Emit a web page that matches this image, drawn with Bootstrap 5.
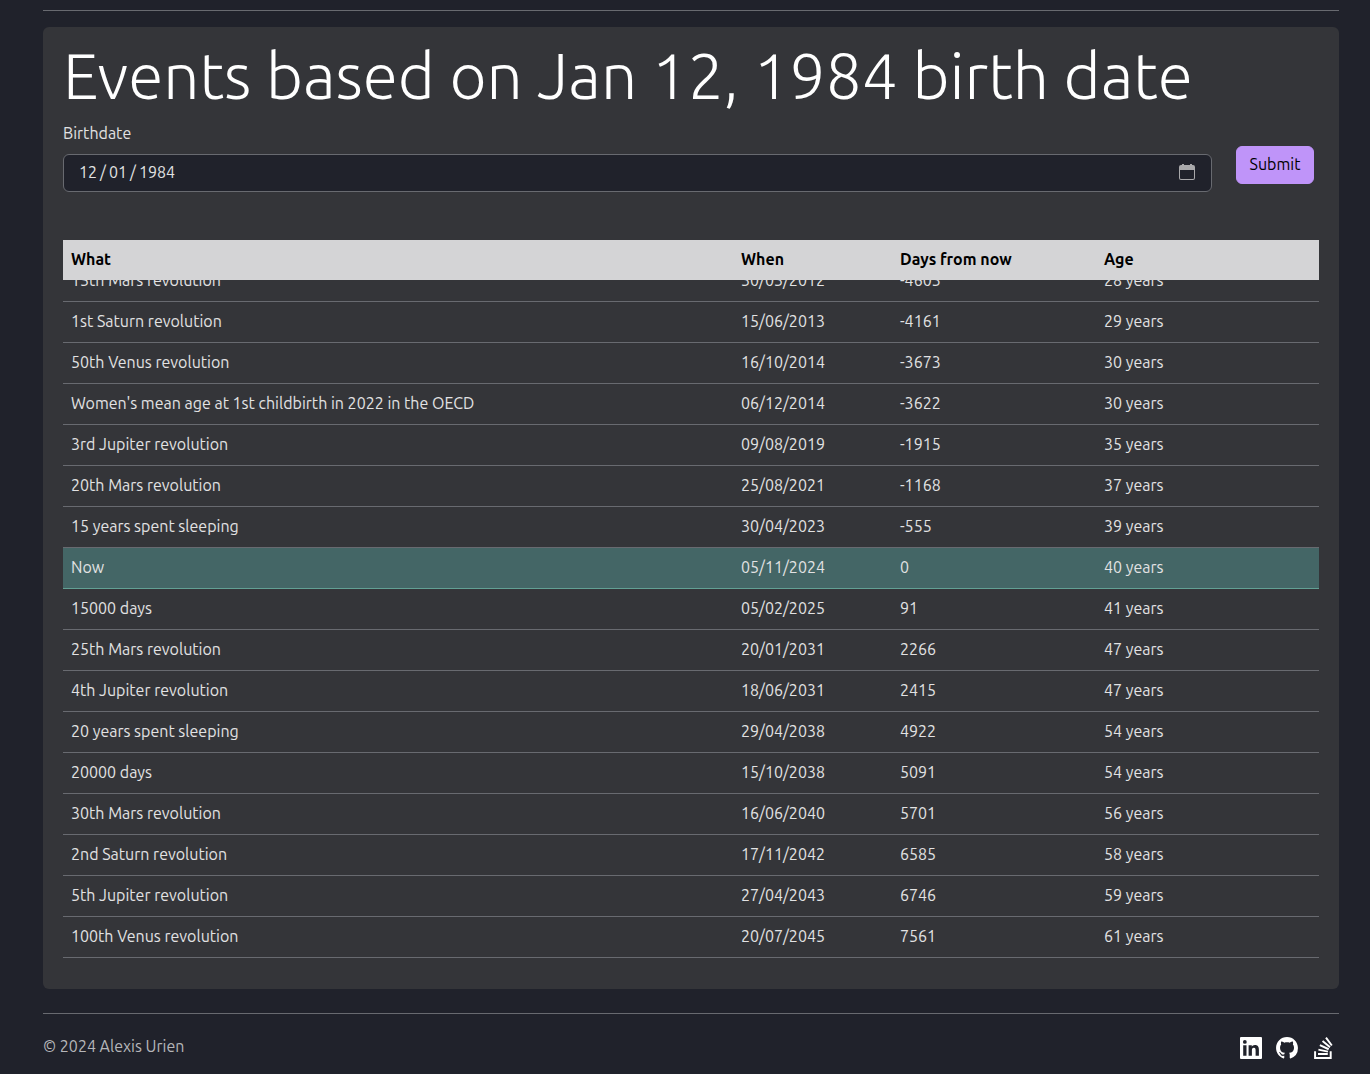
<!DOCTYPE html>
<html lang="en" data-bs-theme="dark">
<head>
<meta charset="utf-8">
<meta name="viewport" content="width=device-width, initial-scale=1">
<title>Events based on Jan 12, 1984 birth date</title>
<link href="https://cdn.jsdelivr.net/npm/bootstrap@5.3.0/dist/css/bootstrap.min.css" rel="stylesheet">
<style>
  body { background: #20222b; color: #e2e2e3; font-family: Ubuntu, "Noto Sans", sans-serif; font-size: 16px; line-height: 24px; }
  .page-wrap { padding: 10px 31px 0 43px; }
  .rule { border-top: 1px solid #686a70; opacity: 1; }
  .panel { background: #343539; border-radius: 6px; padding: 10px 20px 31px; }
  .panel-title { color: #fff; font-size: 64px; line-height: 76px; font-weight: 300; }
  .date-label { margin-bottom: 9px; }
  .date-box { background: #20222b; border-color: #686a70; color: #e2e2e3; border-radius: 6px; padding: 5px 15px 7px; height: 38px; }
  .date-box::-webkit-datetime-edit-text { padding: 0 3px; }
  .date-box::-webkit-calendar-picker-indicator {
    width: 18px; height: 18px; padding: 0; filter: none;
    background: url("data:image/svg+xml,%3Csvg xmlns='http://www.w3.org/2000/svg' viewBox='0 0 18 18'%3E%3Cpath fill='%23a9a9ab' fill-rule='evenodd' d='M4 1h2v1h6V1h2v1h1a2 2 0 0 1 2 2v11a2 2 0 0 1-2 2H3a2 2 0 0 1-2-2V4a2 2 0 0 1 2-2h1zM2 7v8a1 1 0 0 0 1 1h12a1 1 0 0 0 1-1V7z'/%3E%3C/svg%3E") center / 18px no-repeat;
  }
  .submit-col { padding: 25px 5px 0 24px; }
  .btn-violet { --bs-btn-bg: #bf94f9; --bs-btn-border-color: #bf94f9; --bs-btn-color: #000; --bs-btn-hover-bg: #ad7cf2; --bs-btn-hover-color: #000; height: 38px; width: 78px; padding: 0 0 2px; }
  .event-scroll { max-height: 718px; scrollbar-width: none; }
  .event-scroll::-webkit-scrollbar { display: none; }
  .event-table { --bs-table-bg: transparent; --bs-table-color: #e2e2e3; table-layout: fixed; border-collapse: separate; border-spacing: 0; }
  .event-table th { position: sticky; top: 0; background: #d4d4d6; color: #000; border: 0; height: 40px; padding: 7px 8px 9px; }
  .event-table td { border-bottom: 1px solid #686a70; height: 41px; padding: 7px 8px 9px; }
  .event-table .now-row td { background: #446666; border-color: #62a094; }
  .col-when { width: 159px; } .col-days { width: 204px; } .col-age { width: 223px; }
  .copyright { color: #b5b6b9; }
  .social { padding: 5px 3px 0 0; gap: 10px; }
  .social a { color: #fff; }
  .social svg { display: block; fill: currentColor; }
</style>
</head>
<body>
<div class="container-fluid page-wrap">
  <hr class="rule mt-0 mb-3">
  <main class="panel">
    <h1 class="panel-title mb-2">Events based on Jan 12, 1984 birth date</h1>
    <form class="d-flex align-items-start mb-5">
      <div class="flex-grow-1">
        <label for="birthdate" class="d-block date-label">Birthdate</label>
        <input type="date" class="form-control date-box" id="birthdate" value="1984-12-01">
      </div>
      <div class="submit-col"><button type="submit" class="btn btn-violet">Submit</button></div>
    </form>
    <div class="event-scroll overflow-auto" id="events" tabindex="-1">
      <table class="table event-table mb-0">
        <colgroup><col><col class="col-when"><col class="col-days"><col class="col-age"></colgroup>
        <thead><tr><th scope="col">What</th><th scope="col">When</th><th scope="col">Days from now</th><th scope="col">Age</th></tr></thead>
        <tbody>
          <tr><td>15th Mars revolution</td><td>30/03/2012</td><td>-4603</td><td>28 years</td></tr>
          <tr><td>1st Saturn revolution</td><td>15/06/2013</td><td>-4161</td><td>29 years</td></tr>
          <tr><td>50th Venus revolution</td><td>16/10/2014</td><td>-3673</td><td>30 years</td></tr>
          <tr><td>Women's mean age at 1st childbirth in 2022 in the OECD</td><td>06/12/2014</td><td>-3622</td><td>30 years</td></tr>
          <tr><td>3rd Jupiter revolution</td><td>09/08/2019</td><td>-1915</td><td>35 years</td></tr>
          <tr><td>20th Mars revolution</td><td>25/08/2021</td><td>-1168</td><td>37 years</td></tr>
          <tr><td>15 years spent sleeping</td><td>30/04/2023</td><td>-555</td><td>39 years</td></tr>
          <tr class="now-row"><td>Now</td><td>05/11/2024</td><td>0</td><td>40 years</td></tr>
          <tr><td>15000 days</td><td>05/02/2025</td><td>91</td><td>41 years</td></tr>
          <tr><td>25th Mars revolution</td><td>20/01/2031</td><td>2266</td><td>47 years</td></tr>
          <tr><td>4th Jupiter revolution</td><td>18/06/2031</td><td>2415</td><td>47 years</td></tr>
          <tr><td>20 years spent sleeping</td><td>29/04/2038</td><td>4922</td><td>54 years</td></tr>
          <tr><td>20000 days</td><td>15/10/2038</td><td>5091</td><td>54 years</td></tr>
          <tr><td>30th Mars revolution</td><td>16/06/2040</td><td>5701</td><td>56 years</td></tr>
          <tr><td>2nd Saturn revolution</td><td>17/11/2042</td><td>6585</td><td>58 years</td></tr>
          <tr><td>5th Jupiter revolution</td><td>27/04/2043</td><td>6746</td><td>59 years</td></tr>
          <tr><td>100th Venus revolution</td><td>20/07/2045</td><td>7561</td><td>61 years</td></tr>
        </tbody>
      </table>
    </div>
  </main>
  <hr class="rule mt-4 mb-0">
  <footer class="d-flex justify-content-between align-items-start pt-3">
    <span class="copyright pt-1">© 2024 Alexis Urien</span>
    <nav class="social d-flex" aria-label="Social links">
      <a href="#" aria-label="LinkedIn"><svg width="26" height="26" viewBox="0 0 26 26"><path fill-rule="evenodd" d="M3 2h20A1 1 0 0 1 24 3v20a1 1 0 0 1-1 1H3A1 1 0 0 1 2 23V3A1 1 0 0 1 3 2zM5.200 10.300v10.500h3.300V10.300zM6.850 5a1.900 1.900 0 1 0 0 3.800 1.900 1.900 0 0 0 0-3.800zM10.600 10.300v10.500h3.300v-5.200c0-1.500.4-2.800 2-2.800 1.700 0 1.700 1.500 1.700 2.900v5.100h3.300V15c0-2.800-.7-5-4-5-1.500 0-2.600.8-3.100 1.700V10.300z"/></svg></a>
      <a href="#" aria-label="GitHub"><svg width="26" height="26" viewBox="-1.500 -1.500 19 19"><path d="M8 0C3.580 0 0 3.580 0 8c0 3.540 2.290 6.530 5.470 7.590.4.070.55-.17.55-.38 0-.19-.01-.82-.01-1.490-2.010.37-2.530-.49-2.690-.94-.09-.23-.48-.94-.82-1.130-.28-.15-.68-.52-.01-.53.63-.01 1.080.58 1.230.82.72 1.210 1.870.87 2.330.66.07-.52.28-.87.51-1.070-1.780-.2-3.640-.89-3.640-3.950 0-.87.31-1.590.82-2.150-.08-.2-.36-1.020.08-2.120 0 0 .67-.21 2.200.82.64-.18 1.320-.27 2-.27s1.360.09 2 .27c1.530-1.040 2.200-.82 2.200-.82.44 1.100.16 1.920.08 2.120.51.56.82 1.270.82 2.150 0 3.070-1.870 3.750-3.650 3.950.29.25.54.73.54 1.480 0 1.070-.01 1.930-.01 2.200 0 .21.15.46.55.38A8.010 8.010 0 0 0 16 8c0-4.420-3.580-8-8-8z"/></svg></a>
      <a href="#" aria-label="Stack Overflow"><svg width="26" height="26" viewBox="-2 -1.500 19 19"><path d="M12.412 14.572V10.290h1.428V16H1v-5.710h1.428v4.282h9.984z"/><path d="M3.857 13.145h7.137v-1.428H3.857v1.428zM10.254 0 9.108.852l4.260 5.727 1.146-.852L10.254 0zm-3.540 3.377 5.484 4.567.913-1.097L7.627 2.280l-.914 1.097zM4.922 6.550l6.470 3.013.603-1.294-6.470-3.013-.603 1.294zm-.925 3.344 6.985 1.469.294-1.398-6.985-1.468-.294 1.397z"/></svg></a>
    </nav>
  </footer>
</div>
<script src="https://cdn.jsdelivr.net/npm/bootstrap@5.3.0/dist/js/bootstrap.bundle.min.js"></script>
<script>
  // Open the list at its latest events.
  const events = document.getElementById('events');
  events.scrollTop = events.scrollHeight;
</script>
</body>
</html>
